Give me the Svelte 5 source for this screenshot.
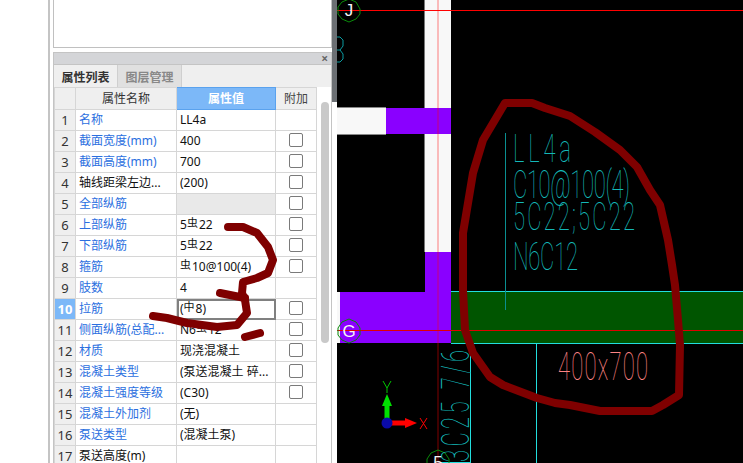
<script>
	const rows = [
		{ n: 1, name: '名称', value: 'LL4a', blue: true },
		{ n: 2, name: '截面宽度(mm)', value: '400', blue: true, check: true },
		{ n: 3, name: '截面高度(mm)', value: '700', blue: true, check: true },
		{ n: 4, name: '轴线距梁左边...', value: '(200)', check: true },
		{ n: 5, name: '全部纵筋', value: '', blue: true, check: true, empty: true },
		{ n: 6, name: '上部纵筋', before: '5', bar: '虫', value: '22', blue: true, check: true },
		{ n: 7, name: '下部纵筋', before: '5', bar: '虫', value: '22', blue: true, check: true },
		{ n: 8, name: '箍筋', before: '', bar: '虫', value: '10@100(4)', blue: true, check: true },
		{ n: 9, name: '肢数', value: '4', blue: true },
		{ n: 10, name: '拉筋', before: '(', bar: '中', value: '8)', blue: true, check: true, active: true },
		{ n: 11, name: '侧面纵筋(总配...', before: 'N6', bar: '虫', value: '12', blue: true, check: true },
		{ n: 12, name: '材质', value: '现浇混凝土', blue: true, check: true },
		{ n: 13, name: '混凝土类型', value: '(泵送混凝土 碎...', blue: true, check: true },
		{ n: 14, name: '混凝土强度等级', value: '(C30)', blue: true, check: true },
		{ n: 15, name: '混凝土外加剂', value: '(无)', blue: true },
		{ n: 16, name: '泵送类型', value: '(混凝土泵)', blue: true },
		{ n: 17, name: '泵送高度(m)', value: '' }
	];

	// CAD labels are drawn in a narrow, widely spaced style
	const labels = [
		{ x: 513, y: 162, w: 58, text: 'LL4a' },
		{ x: 513, y: 198, w: 117, text: 'C10@100(4)' },
		{ x: 513, y: 230, w: 122, text: '5C22;5C22' },
		{ x: 513, y: 270, w: 65, text: 'N6C12' }
	];
	const squeeze = 0.58;
</script>

<div class="page">
	<div class="margin"></div>

	<aside class="sidebar">
		<div class="preview"></div>
		<div class="panel">
			<div class="panel-head"><span class="close">×</span></div>
			<div class="tabs">
				<span class="tab active">属性列表</span>
				<span class="tab">图层管理</span>
			</div>
			<div class="body">
				<table>
					<thead>
						<tr>
							<th class="num"></th>
							<th class="name">属性名称</th>
							<th class="val">属性值</th>
							<th class="add">附加</th>
						</tr>
					</thead>
					<tbody>
						{#each rows as r}
							<tr>
								<td class="num" class:on={r.active}>{r.n}</td>
								<td class="name" class:blue={r.blue}>{r.name}</td>
								<td class="val" class:empty={r.empty} class:editing={r.active}>
									{#if r.bar}{r.before}<span class="bar">{r.bar}</span>{/if}{r.value}
								</td>
								<td class="add">
									{#if r.check}<span class="check"></span>{/if}
								</td>
							</tr>
						{/each}
					</tbody>
				</table>
				<div class="scroll"><div class="thumb"></div></div>
			</div>
		</div>
	</aside>

	<div class="splitter"><div class="grip"></div></div>

	<svg class="canvas" viewBox="337 0 406 463" width="406" height="463">
		<rect x="337" y="0" width="406" height="463" fill="#000" />

		<!-- walls and beams -->
		<rect x="425" y="0" width="26" height="252" fill="#f8f8f8" />
		<line x1="424.5" y1="0" x2="424.5" y2="108" stroke="#777" />
		<line x1="424.5" y1="134" x2="424.5" y2="252" stroke="#777" />
		<rect x="337" y="108" width="49" height="26" fill="#f8f8f8" />
		<line x1="337" y1="107.5" x2="386" y2="107.5" stroke="#888" />
		<line x1="337" y1="134.5" x2="386" y2="134.5" stroke="#888" />
		<rect x="386" y="108" width="65" height="26" fill="#8a00ff" />
		<rect x="425" y="252" width="26" height="40" fill="#8a00ff" />
		<rect x="337" y="292" width="3" height="51" fill="#f8f8f8" />
		<rect x="340" y="292" width="111" height="51" fill="#8a00ff" />
		<rect x="451" y="292" width="292" height="51" fill="#005500" />
		<line x1="451" y1="291.5" x2="743" y2="291.5" stroke="#22dede" />
		<line x1="451" y1="343.5" x2="743" y2="343.5" stroke="#22dede" />
		<line x1="470.5" y1="343" x2="470.5" y2="463" stroke="#22dede" />
		<line x1="536.5" y1="343" x2="536.5" y2="463" stroke="#22dede" />
		<line x1="440" y1="462.5" x2="470" y2="462.5" stroke="#22dede" />

		<!-- axis lines -->
		<line x1="438" y1="0" x2="438" y2="463" stroke="#ff0000" stroke-opacity="0.5" />
		<line x1="337" y1="10.5" x2="743" y2="10.5" stroke="#ff0000" />
		<line x1="337" y1="330.5" x2="743" y2="330.5" stroke="#e00000" />

		<!-- grid bubbles -->
		<g fill="none" stroke="#0a8a0a">
			<polygon points="349,-1 356,2 360,9 360,14 356,19 349,22 342,19 338,14 338,7 342,2" />
			<polygon points="349,319 356,322 360,328 360,335 356,340 349,343 342,340 338,335 338,328 342,322" />
			<polygon points="438,450 445,453 449,459 449,470 427,470 427,459 431,453" />
		</g>
		<g class="bubble">
			<text x="349" y="16" text-anchor="middle">J</text>
			<text x="349" y="337" text-anchor="middle">G</text>
			<text x="438" y="468" text-anchor="middle">5</text>
		</g>

		<!-- leftover dimension text at the edge -->
		<path d="M337 37 h3 l3 3 v6 l-3 4 h-3 M340 50 l3 4 v5 l-3 3 h-3" fill="none" stroke="#0a9aa0" />

		<!-- beam label -->
		<line x1="505.5" y1="133" x2="505.5" y2="310" stroke="#0a8f90" />
		<g class="cad teal">
			{#each labels as l}
				<text transform="translate({l.x} {l.y}) scale({squeeze} 1)" textLength={l.w / squeeze} lengthAdjust="spacing">{l.text}</text>
			{/each}
			<text transform="translate(469 462) rotate(-90) scale({squeeze} 1)" textLength={112 / squeeze} lengthAdjust="spacing">3C25 7/6</text>
		</g>
		<g class="cad salmon">
			<text transform="translate(558 380) scale({squeeze} 1)" textLength={90 / squeeze} lengthAdjust="spacing">400x700</text>
		</g>

		<!-- ucs -->
		<line x1="387" y1="423" x2="387" y2="404" stroke="#00e000" stroke-width="5" />
		<polygon points="387,394 382,406 392,406" fill="#00e000" />
		<line x1="387" y1="423" x2="407" y2="423" stroke="#ff0000" stroke-width="5" />
		<polygon points="417,423 405,418 405,428" fill="#ff0000" />
		<circle cx="387" cy="423" r="5.5" fill="#0a0aa8" />
		<path d="M383 381 L387 388 L391 381 M387 388 V393" fill="none" stroke="#00c800" />
		<path d="M420 418 L427 429 M427 418 L420 429" fill="none" stroke="#ff0000" />
	</svg>

	<!-- hand-drawn marks lie over both the panel and the canvas -->
	<svg class="marks" viewBox="0 0 743 463" width="743" height="463">
		<g fill="none" stroke="#7f0000" stroke-width="8" stroke-linecap="round" stroke-linejoin="round">
			<path d="M505 103 L532 103 L545 108 L570 116 L595 132 L620 150 L637 167 L650 190 L660 205 L668 240 L672 265 L675 285 L678 320 L680 345 L679 395 L663 405 L652 411 L600 411 L570 405 L555 403 L537 398 L503 385 L490 377 L473 353 L465 330 L463 290 L463 233 L473 173 L483 140 Z" />
			<path d="M228 227 L243 227 L257 233 L268 247 L273 260 L268 273 L257 278 L243 282 L242 293 L245 300 L247 313 L237 325 L217 327 L187 323 L167 318 L153 316" />
			<path d="M220 293 L245 298" />
			<path d="M245 337 L260 333" />
		</g>
	</svg>
</div>

<style>
	:global(body) {
		margin: 0;
		background: #fff;
	}
	.page {
		position: relative;
		display: flex;
		width: 743px;
		height: 463px;
		overflow: hidden;
		font-family: "Noto Sans", "Noto Sans CJK SC", sans-serif;
		font-size: 12px;
		color: #111;
	}
	.margin {
		width: 48px;
		flex: none;
		border-right: 2px solid #c4c4c4;
	}
	.sidebar {
		width: 279px;
		flex: none;
		margin-left: 3px;
		display: flex;
		flex-direction: column;
		gap: 4px;
	}
	.preview {
		height: 48px;
		flex: none;
		box-sizing: border-box;
		border: 1px solid #c0c0c0;
		border-top: none;
	}
	.panel {
		flex: 1;
		min-height: 0;
		border-left: 1px solid #c4c4c4;
		border-right: 1px solid #c4c4c4;
		display: flex;
		flex-direction: column;
	}
	.panel-head {
		height: 11px;
		flex: none;
		background: #d4d5d8;
		border-top: 1px solid #c4c4c4;
		border-bottom: 1px solid #c4c4c4;
		display: flex;
		justify-content: flex-end;
		align-items: center;
		padding-right: 3px;
	}
	.close {
		font-size: 12px;
		line-height: 11px;
		color: #666;
		font-weight: 700;
	}
	.tabs {
		height: 22px;
		flex: none;
		display: flex;
		background: #efefef;
	}
	.tab {
		width: 64px;
		padding-top: 1px;
		box-sizing: border-box;
		display: flex;
		align-items: center;
		justify-content: center;
		background: #e0e0e0;
		color: #888;
		font-weight: 700;
		border-right: 1px solid #cfcfcf;
	}
	.tab.active {
		background: #efefef;
		color: #333;
	}
	.body {
		flex: 1;
		min-height: 0;
		display: flex;
		background: #fff;
	}
	table {
		width: 262px;
		flex: none;
		table-layout: fixed;
		border-collapse: collapse;
		align-self: flex-start;
	}
	th, td {
		height: 20px;
		padding: 0;
		box-sizing: content-box;
		border: 1px solid #d6d6d6;
		font-weight: 400;
		white-space: nowrap;
		overflow: hidden;
		line-height: 20px;
	}
	th {
		height: 21px;
		background: #efefef;
		text-align: center;
		color: #333;
	}
	th.num { width: 20px; }
	th.name { width: 100px; }
	th.val {
		width: 98px;
		background: #7cb8f8;
		color: #fff;
		border-color: #5aa2ee;
		font-weight: 700;
	}
	th.add { width: 40px; color: #444; }
	td.num {
		background: #efefef;
		text-align: center;
		color: #333;
		font-size: 13px;
	}
	td.num.on {
		background: #7cb8f8;
		color: #fff;
		font-weight: 700;
	}
	td.name { padding-left: 3px; }
	td.name.blue { color: #2b6fe0; }
	td.val { padding-left: 3px; }
	td.val.empty { background: #e9e9e9; }
	td.val.editing {
		outline: 2px solid #808080;
		outline-offset: -2px;
	}
	td.add { text-align: center; }
	.bar {
		font-size: 11px;
		position: relative;
		top: -2px;
		margin: 0 1px 0 0;
	}
	.check {
		display: inline-block;
		width: 12px;
		height: 12px;
		border: 1px solid #7a7a7a;
		border-radius: 2px;
		vertical-align: -2px;
	}
	.scroll {
		flex: 1;
		position: relative;
		background: #fff;
	}
	.thumb {
		position: absolute;
		left: 4px;
		top: 15px;
		width: 8px;
		height: 241px;
		background: #c9c9c9;
		border-radius: 4px;
	}
	.splitter {
		width: 5px;
		flex: none;
		position: relative;
		background: #fff;
	}
	.grip {
		height: 102px;
		background: #6c7074;
	}
	.canvas {
		flex: none;
		display: block;
	}
	.marks {
		position: absolute;
		left: 0;
		top: 0;
		pointer-events: none;
	}
	.bubble text {
		font-family: "Liberation Sans", sans-serif;
		font-size: 17px;
		fill: #f4f4f4;
	}
	.cad text {
		font-family: Roboto, "Liberation Sans", sans-serif;
		font-weight: 100;
		font-size: 38px;
	}
	.cad.teal text { fill: #14b8b8; }
	.cad.salmon text { fill: #ff8484; }
</style>
